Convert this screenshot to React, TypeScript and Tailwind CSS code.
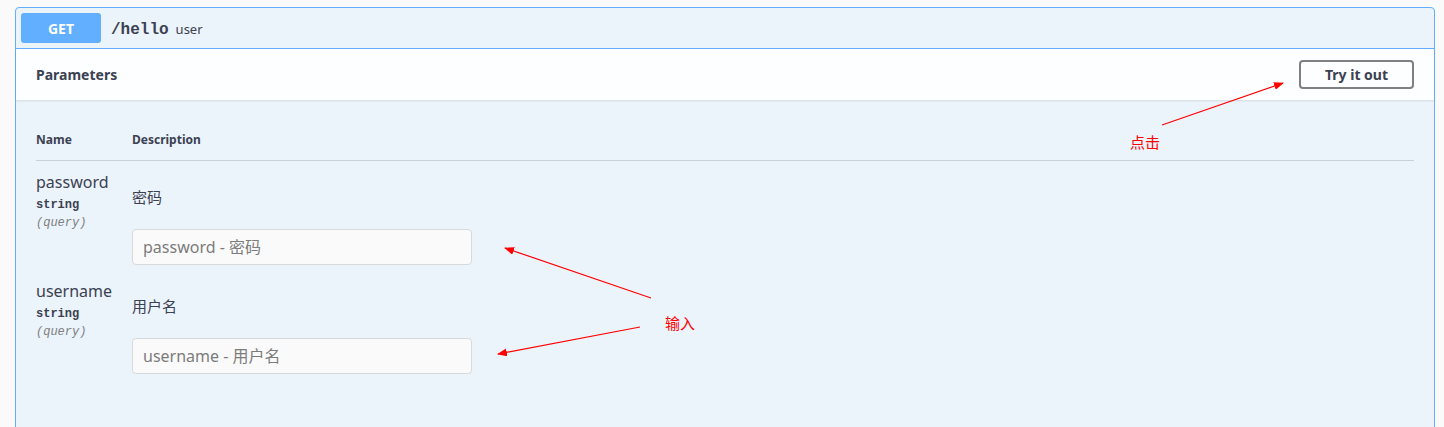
import React from "react";

const params = [
  { name: "password", desc: "密码" },
  { name: "username", desc: "用户名" },
];

function Annotations() {
  return (
    <div className="pointer-events-none absolute inset-0">
      <svg width="1444" height="427" className="absolute left-0 top-0">
        <defs>
          <marker id="head" markerWidth="10" markerHeight="8" refX="9" refY="4" orient="auto" markerUnits="userSpaceOnUse">
            <path d="M0 0 L10 4 L0 8 Z" fill="#ff0000" />
          </marker>
        </defs>
        <line x1="1162" y1="125" x2="1283" y2="83" stroke="#ff0000" strokeWidth="1.2" markerEnd="url(#head)" />
        <line x1="651" y1="298" x2="505" y2="248" stroke="#ff0000" strokeWidth="1.2" markerEnd="url(#head)" />
        <line x1="640" y1="327" x2="498" y2="354" stroke="#ff0000" strokeWidth="1.2" markerEnd="url(#head)" />
      </svg>
      <span className="absolute left-[1130px] top-[132px] text-[15px] leading-[20px] text-[#ff0000]">点击</span>
      <span className="absolute left-[665px] top-[313px] text-[15px] leading-[20px] text-[#ff0000]">输入</span>
    </div>
  );
}

export default function App() {
  return (
    <div
      className="relative h-[427px] overflow-hidden bg-[#fafafa] pl-[15px] pr-[9px] pt-[7px] text-[#3b4151]"
      style={{ fontFamily: '"Noto Sans", "Noto Sans CJK SC", sans-serif' }}
    >
      <div className="rounded-[4px] border border-[#61affe] bg-[#ebf3fb] pb-[80px]">
        {/* summary */}
        <div className="flex items-center border-b border-[#61affe] p-[5px]">
          <div className="flex h-[30px] w-[80px] items-center justify-center rounded-[3px] bg-[#61affe] text-[14px] font-bold text-white">
            GET
          </div>
          <span className="ml-[10px] mt-[3px] text-[16px] font-bold" style={{ fontFamily: '"Liberation Mono", monospace' }}>
            /hello
          </span>
          <span className="ml-[7px] mt-[4px] text-[13px]">user</span>
        </div>

        {/* section header */}
        <div className="flex items-center justify-between bg-[#fdfeff] px-[20px] py-[11px] shadow-[0_1px_2px_rgba(0,0,0,0.1)]">
          <h4 className="text-[14px] font-bold">Parameters</h4>
          <button className="h-[29px] w-[115px] rounded-[4px] border-2 border-[#808080] text-[14px] font-bold">
            Try it out
          </button>
        </div>

        {/* table */}
        <div className="px-[20px] pt-[20px]">
          <div className="flex border-b border-[#c8d0da] py-[12px] text-[12px] font-bold leading-[16px]">
            <div className="w-[96px]">Name</div>
            <div>Description</div>
          </div>
          {params.map((p) => (
            <div key={p.name} className="flex pb-[5px] pt-[10px]">
              <div className="w-[96px]">
                <div className="text-[16px] leading-[22px]">{p.name}</div>
                <div
                  className="mt-[4px] text-[12px] font-bold leading-[16px]"
                  style={{ fontFamily: '"Liberation Mono", monospace' }}
                >
                  string
                </div>
                <div
                  className="mt-[2px] text-[12px] italic leading-[16px] text-[#808080]"
                  style={{ fontFamily: '"Liberation Mono", monospace' }}
                >
                  (query)
                </div>
              </div>
              <div>
                <p className="mt-[16px] text-[15px] leading-[20px]">{p.desc}</p>
                <input
                  className="mt-[22px] h-[36px] w-[340px] rounded-[4px] border border-[#d9d9d9] bg-[#fafafa] px-[10px] text-[16px] placeholder:text-[#7c7c7c]"
                  placeholder={`${p.name} - ${p.desc}`}
                />
              </div>
            </div>
          ))}
        </div>
      </div>
      <Annotations />
    </div>
  );
}
